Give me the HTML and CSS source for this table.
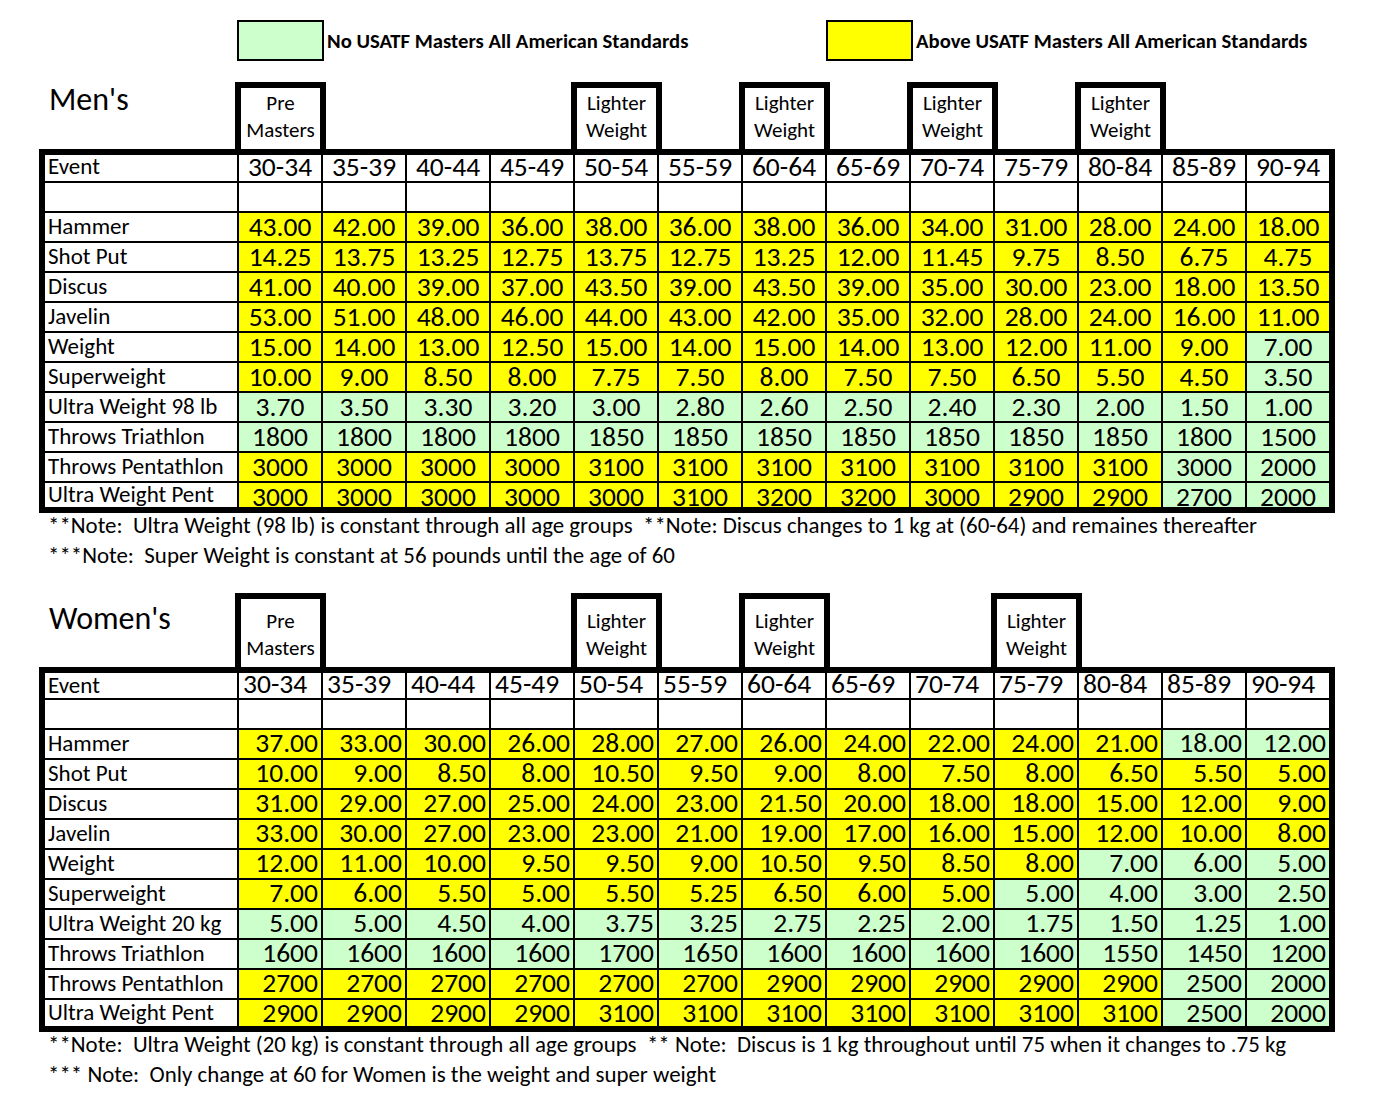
FILE: index.html
```html
<!DOCTYPE html>
<html lang="en">
<head>
<meta charset="utf-8">
<title>USATF Masters Throws Standards</title>
<link rel="stylesheet" href="styles.css">
</head>
<body>
<div class="page">
  <div class="legend">
    <div class="legend-item first"><div class="swatch g"></div><span class="legend-text">No USATF Masters All American Standards</span></div>
    <div class="legend-item"><div class="swatch y"></div><span class="legend-text">Above USATF Masters All American Standards</span></div>
  </div>

  <section class="section men">
    <div class="heads">
      <div class="title">Men's</div>
      <div class="hbox c2"><span>Pre</span><span>Masters</span></div>
      <div class="hbox c6"><span>Lighter</span><span>Weight</span></div>
      <div class="hbox c8"><span>Lighter</span><span>Weight</span></div>
      <div class="hbox c10"><span>Lighter</span><span>Weight</span></div>
      <div class="hbox c12"><span>Lighter</span><span>Weight</span></div>
    </div>
    <div class="sheet">
      <div class="row head"><div class="cell lab">Event</div><div class="cell v">30-34</div><div class="cell v">35-39</div><div class="cell v">40-44</div><div class="cell v">45-49</div><div class="cell v">50-54</div><div class="cell v">55-59</div><div class="cell v">60-64</div><div class="cell v">65-69</div><div class="cell v">70-74</div><div class="cell v">75-79</div><div class="cell v">80-84</div><div class="cell v">85-89</div><div class="cell v">90-94</div></div>
      <div class="row blank"><div class="cell lab"></div><div class="cell"></div><div class="cell"></div><div class="cell"></div><div class="cell"></div><div class="cell"></div><div class="cell"></div><div class="cell"></div><div class="cell"></div><div class="cell"></div><div class="cell"></div><div class="cell"></div><div class="cell"></div><div class="cell"></div></div>
      <div class="row data"><div class="cell lab">Hammer</div><div class="cell v y">43.00</div><div class="cell v y">42.00</div><div class="cell v y">39.00</div><div class="cell v y">36.00</div><div class="cell v y">38.00</div><div class="cell v y">36.00</div><div class="cell v y">38.00</div><div class="cell v y">36.00</div><div class="cell v y">34.00</div><div class="cell v y">31.00</div><div class="cell v y">28.00</div><div class="cell v y">24.00</div><div class="cell v y">18.00</div></div>
      <div class="row data"><div class="cell lab">Shot Put</div><div class="cell v y">14.25</div><div class="cell v y">13.75</div><div class="cell v y">13.25</div><div class="cell v y">12.75</div><div class="cell v y">13.75</div><div class="cell v y">12.75</div><div class="cell v y">13.25</div><div class="cell v y">12.00</div><div class="cell v y">11.45</div><div class="cell v y">9.75</div><div class="cell v y">8.50</div><div class="cell v y">6.75</div><div class="cell v y">4.75</div></div>
      <div class="row data"><div class="cell lab">Discus</div><div class="cell v y">41.00</div><div class="cell v y">40.00</div><div class="cell v y">39.00</div><div class="cell v y">37.00</div><div class="cell v y">43.50</div><div class="cell v y">39.00</div><div class="cell v y">43.50</div><div class="cell v y">39.00</div><div class="cell v y">35.00</div><div class="cell v y">30.00</div><div class="cell v y">23.00</div><div class="cell v y">18.00</div><div class="cell v y">13.50</div></div>
      <div class="row data"><div class="cell lab">Javelin</div><div class="cell v y">53.00</div><div class="cell v y">51.00</div><div class="cell v y">48.00</div><div class="cell v y">46.00</div><div class="cell v y">44.00</div><div class="cell v y">43.00</div><div class="cell v y">42.00</div><div class="cell v y">35.00</div><div class="cell v y">32.00</div><div class="cell v y">28.00</div><div class="cell v y">24.00</div><div class="cell v y">16.00</div><div class="cell v y">11.00</div></div>
      <div class="row data"><div class="cell lab">Weight</div><div class="cell v y">15.00</div><div class="cell v y">14.00</div><div class="cell v y">13.00</div><div class="cell v y">12.50</div><div class="cell v y">15.00</div><div class="cell v y">14.00</div><div class="cell v y">15.00</div><div class="cell v y">14.00</div><div class="cell v y">13.00</div><div class="cell v y">12.00</div><div class="cell v y">11.00</div><div class="cell v y">9.00</div><div class="cell v g">7.00</div></div>
      <div class="row data"><div class="cell lab">Superweight</div><div class="cell v y">10.00</div><div class="cell v y">9.00</div><div class="cell v y">8.50</div><div class="cell v y">8.00</div><div class="cell v y">7.75</div><div class="cell v y">7.50</div><div class="cell v y">8.00</div><div class="cell v y">7.50</div><div class="cell v y">7.50</div><div class="cell v y">6.50</div><div class="cell v y">5.50</div><div class="cell v y">4.50</div><div class="cell v g">3.50</div></div>
      <div class="row data"><div class="cell lab">Ultra Weight 98 lb</div><div class="cell v g">3.70</div><div class="cell v g">3.50</div><div class="cell v g">3.30</div><div class="cell v g">3.20</div><div class="cell v g">3.00</div><div class="cell v g">2.80</div><div class="cell v g">2.60</div><div class="cell v g">2.50</div><div class="cell v g">2.40</div><div class="cell v g">2.30</div><div class="cell v g">2.00</div><div class="cell v g">1.50</div><div class="cell v g">1.00</div></div>
      <div class="row data"><div class="cell lab">Throws Triathlon</div><div class="cell v g">1800</div><div class="cell v g">1800</div><div class="cell v g">1800</div><div class="cell v g">1800</div><div class="cell v g">1850</div><div class="cell v g">1850</div><div class="cell v g">1850</div><div class="cell v g">1850</div><div class="cell v g">1850</div><div class="cell v g">1850</div><div class="cell v g">1850</div><div class="cell v g">1800</div><div class="cell v g">1500</div></div>
      <div class="row data"><div class="cell lab">Throws Pentathlon</div><div class="cell v y">3000</div><div class="cell v y">3000</div><div class="cell v y">3000</div><div class="cell v y">3000</div><div class="cell v y">3100</div><div class="cell v y">3100</div><div class="cell v y">3100</div><div class="cell v y">3100</div><div class="cell v y">3100</div><div class="cell v y">3100</div><div class="cell v y">3100</div><div class="cell v g">3000</div><div class="cell v g">2000</div></div>
      <div class="row last"><div class="cell lab">Ultra Weight Pent</div><div class="cell v y">3000</div><div class="cell v y">3000</div><div class="cell v y">3000</div><div class="cell v y">3000</div><div class="cell v y">3000</div><div class="cell v y">3100</div><div class="cell v y">3200</div><div class="cell v y">3200</div><div class="cell v y">3000</div><div class="cell v y">2900</div><div class="cell v y">2900</div><div class="cell v g">2700</div><div class="cell v g">2000</div></div>
    </div>
    <div class="notes">
      <p>**Note:  Ultra Weight (98 lb) is constant through all age groups  **Note: Discus changes to 1 kg at (60-64) and remaines thereafter</p>
      <p>***Note:  Super Weight is constant at 56 pounds until the age of 60</p>
    </div>
  </section>

  <section class="section women">
    <div class="heads">
      <div class="title">Women's</div>
      <div class="hbox c2"><span>Pre</span><span>Masters</span></div>
      <div class="hbox c6"><span>Lighter</span><span>Weight</span></div>
      <div class="hbox c8"><span>Lighter</span><span>Weight</span></div>
      <div class="hbox c11"><span>Lighter</span><span>Weight</span></div>
    </div>
    <div class="sheet">
      <div class="row head"><div class="cell lab">Event</div><div class="cell v">30-34</div><div class="cell v">35-39</div><div class="cell v">40-44</div><div class="cell v">45-49</div><div class="cell v">50-54</div><div class="cell v">55-59</div><div class="cell v">60-64</div><div class="cell v">65-69</div><div class="cell v">70-74</div><div class="cell v">75-79</div><div class="cell v">80-84</div><div class="cell v">85-89</div><div class="cell v">90-94</div></div>
      <div class="row blank"><div class="cell lab"></div><div class="cell"></div><div class="cell"></div><div class="cell"></div><div class="cell"></div><div class="cell"></div><div class="cell"></div><div class="cell"></div><div class="cell"></div><div class="cell"></div><div class="cell"></div><div class="cell"></div><div class="cell"></div><div class="cell"></div></div>
      <div class="row data"><div class="cell lab">Hammer</div><div class="cell v y">37.00</div><div class="cell v y">33.00</div><div class="cell v y">30.00</div><div class="cell v y">26.00</div><div class="cell v y">28.00</div><div class="cell v y">27.00</div><div class="cell v y">26.00</div><div class="cell v y">24.00</div><div class="cell v y">22.00</div><div class="cell v y">24.00</div><div class="cell v y">21.00</div><div class="cell v g">18.00</div><div class="cell v g">12.00</div></div>
      <div class="row data"><div class="cell lab">Shot Put</div><div class="cell v y">10.00</div><div class="cell v y">9.00</div><div class="cell v y">8.50</div><div class="cell v y">8.00</div><div class="cell v y">10.50</div><div class="cell v y">9.50</div><div class="cell v y">9.00</div><div class="cell v y">8.00</div><div class="cell v y">7.50</div><div class="cell v y">8.00</div><div class="cell v y">6.50</div><div class="cell v y">5.50</div><div class="cell v y">5.00</div></div>
      <div class="row data"><div class="cell lab">Discus</div><div class="cell v y">31.00</div><div class="cell v y">29.00</div><div class="cell v y">27.00</div><div class="cell v y">25.00</div><div class="cell v y">24.00</div><div class="cell v y">23.00</div><div class="cell v y">21.50</div><div class="cell v y">20.00</div><div class="cell v y">18.00</div><div class="cell v y">18.00</div><div class="cell v y">15.00</div><div class="cell v y">12.00</div><div class="cell v y">9.00</div></div>
      <div class="row data"><div class="cell lab">Javelin</div><div class="cell v y">33.00</div><div class="cell v y">30.00</div><div class="cell v y">27.00</div><div class="cell v y">23.00</div><div class="cell v y">23.00</div><div class="cell v y">21.00</div><div class="cell v y">19.00</div><div class="cell v y">17.00</div><div class="cell v y">16.00</div><div class="cell v y">15.00</div><div class="cell v y">12.00</div><div class="cell v y">10.00</div><div class="cell v y">8.00</div></div>
      <div class="row data"><div class="cell lab">Weight</div><div class="cell v y">12.00</div><div class="cell v y">11.00</div><div class="cell v y">10.00</div><div class="cell v y">9.50</div><div class="cell v y">9.50</div><div class="cell v y">9.00</div><div class="cell v y">10.50</div><div class="cell v y">9.50</div><div class="cell v y">8.50</div><div class="cell v y">8.00</div><div class="cell v g">7.00</div><div class="cell v g">6.00</div><div class="cell v g">5.00</div></div>
      <div class="row data"><div class="cell lab">Superweight</div><div class="cell v y">7.00</div><div class="cell v y">6.00</div><div class="cell v y">5.50</div><div class="cell v y">5.00</div><div class="cell v y">5.50</div><div class="cell v y">5.25</div><div class="cell v y">6.50</div><div class="cell v y">6.00</div><div class="cell v y">5.00</div><div class="cell v g">5.00</div><div class="cell v g">4.00</div><div class="cell v g">3.00</div><div class="cell v g">2.50</div></div>
      <div class="row data"><div class="cell lab">Ultra Weight 20 kg</div><div class="cell v g">5.00</div><div class="cell v g">5.00</div><div class="cell v g">4.50</div><div class="cell v g">4.00</div><div class="cell v g">3.75</div><div class="cell v g">3.25</div><div class="cell v g">2.75</div><div class="cell v g">2.25</div><div class="cell v g">2.00</div><div class="cell v g">1.75</div><div class="cell v g">1.50</div><div class="cell v g">1.25</div><div class="cell v g">1.00</div></div>
      <div class="row data"><div class="cell lab">Throws Triathlon</div><div class="cell v g">1600</div><div class="cell v g">1600</div><div class="cell v g">1600</div><div class="cell v g">1600</div><div class="cell v g">1700</div><div class="cell v g">1650</div><div class="cell v g">1600</div><div class="cell v g">1600</div><div class="cell v g">1600</div><div class="cell v g">1600</div><div class="cell v g">1550</div><div class="cell v g">1450</div><div class="cell v g">1200</div></div>
      <div class="row data"><div class="cell lab">Throws Pentathlon</div><div class="cell v y">2700</div><div class="cell v y">2700</div><div class="cell v y">2700</div><div class="cell v y">2700</div><div class="cell v y">2700</div><div class="cell v y">2700</div><div class="cell v y">2900</div><div class="cell v y">2900</div><div class="cell v y">2900</div><div class="cell v y">2900</div><div class="cell v y">2900</div><div class="cell v g">2500</div><div class="cell v g">2000</div></div>
      <div class="row last"><div class="cell lab">Ultra Weight Pent</div><div class="cell v y">2900</div><div class="cell v y">2900</div><div class="cell v y">2900</div><div class="cell v y">2900</div><div class="cell v y">3100</div><div class="cell v y">3100</div><div class="cell v y">3100</div><div class="cell v y">3100</div><div class="cell v y">3100</div><div class="cell v y">3100</div><div class="cell v y">3100</div><div class="cell v g">2500</div><div class="cell v g">2000</div></div>
    </div>
    <div class="notes">
      <p>**Note:  Ultra Weight (20 kg) is constant through all age groups  ** Note:  Discus is 1 kg throughout until 75 when it changes to .75 kg</p>
      <p>*** Note:  Only change at 60 for Women is the weight and super weight</p>
    </div>
  </section>
</div>
</body>
</html>
```
FILE: styles.css
```css
* { box-sizing: border-box; }

body {
  margin: 0;
  background: #fff;
  color: #000;
  font-family: Carlito, Calibri, "Liberation Sans", sans-serif;
}

.page { padding-top: 20px; }

/* legend */
.legend { display: flex; padding-left: 237px; height: 41px; }
.legend-item { display: flex; align-items: center; }
.legend-item.first { width: 589px; }
.swatch { width: 87px; height: 41px; border: 2px solid #000; flex: none; }
.legend-text { margin-left: 3px; font-weight: bold; font-size: 20.7px; white-space: nowrap; }

.y { background: #ffff00 !important; }
.g { background: #ccffcc !important; }

/* sections */
.section { margin-left: 39px; width: 1296px; }
.section.men { margin-top: 21px; }
.section.women { margin-top: 23px; }

.heads {
  display: grid;
  grid-template-columns: 192px repeat(13, 82px);
  column-gap: 2px;
  padding: 0 6px;
}
.men .heads { height: 67px; }
.women .heads { height: 74px; }

.title { font-size: 32px; line-height: 32px; padding-left: 4px; white-space: nowrap; }
.men .title { padding-top: 2px; }
.women .title { padding-top: 10px; }

.hbox {
  border: 6px solid #000;
  border-bottom: 0;
  margin: 0 -5px 0 -4px;
  display: flex;
  flex-direction: column;
  justify-content: flex-start;
  align-items: center;
  font-size: 21px;
  line-height: 27px;
  background: #fff;
}
.men .hbox { padding-top: 1.5px; }
.women .hbox { padding-top: 8.5px; }
.c2 { grid-column: 2; }
.c6 { grid-column: 6; }
.c8 { grid-column: 8; }
.c10 { grid-column: 10; }
.c11 { grid-column: 11; }
.c12 { grid-column: 12; }

/* table grid */
.sheet {
  display: grid;
  grid-template-columns: 192px repeat(13, 82px);
  gap: 2px;
  padding: 6px;
  background: #000;
}
.men .sheet { grid-template-rows: 26px 28px repeat(9, 28px) 24px; }
.women .sheet { grid-template-rows: 25px 28px repeat(9, 28px) 26px; }

.row { display: contents; }
.cell { background: #fff; white-space: nowrap; }

.lab { font-size: 23px; line-height: 26px; padding-left: 3px; }
.v { font-size: 27.5px; }

/* men: centred values */
.men .v { text-align: center; padding-top: 1px; line-height: 26px; }
.men .head .v { padding-top: 0; line-height: 24px; }
.men .head .lab { line-height: 22px; }
.men .last .v { padding-top: 1px; line-height: 26px; }
.men .last .lab { line-height: 22px; }

/* women: right-aligned values, left-aligned headings */
.women .v { text-align: right; padding-right: 3px; padding-top: 0; line-height: 26px; }
.women .head .v { text-align: left; padding: 0 0 0 4px; line-height: 22px; }
.women .head .lab { line-height: 25px; }
.women .last .v { padding-top: 3px; line-height: 20px; }
.women .last .lab { line-height: 24px; }

/* notes */
.notes { margin-top: -3px; padding-left: 9px; font-size: 22.9px; line-height: 30px; }
.notes p { margin: 0; white-space: pre; }
```
